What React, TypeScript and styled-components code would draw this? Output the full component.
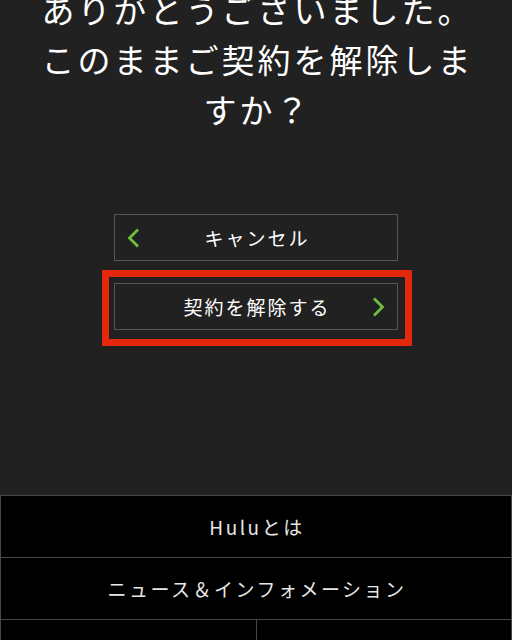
import styled, { createGlobalStyle } from 'styled-components'

const GlobalStyle = createGlobalStyle`
    html, body {
        margin: 0;
        padding: 0;
        background-color: #212121;
        font-family: 'Noto Sans CJK JP', 'Noto Sans', sans-serif;
    }
`

const Chevron = ({ dir }: { dir: 'left' | 'right' }) => (
    <svg width="13" height="20" viewBox="0 0 13 20">
        <polyline
            points={dir === 'left' ? '11,1.5 2.5,10 11,18.5' : '2,1.5 10.5,10 2,18.5'}
            fill="none"
            stroke="#6fbf3c"
            strokeWidth="2.8"
        />
    </svg>
)

export default function App() {
    return (
        <>
            <GlobalStyle />
            <Page>
                <Main>
                    <Title>
                        ありがとうございました。
                        <br />
                        このままご契約を解除しますか？
                    </Title>
                    <Actions>
                        <ActionButton>
                            <IconCell side="left"><Chevron dir="left" /></IconCell>
                            <Label>キャンセル</Label>
                            <IconCell side="right" />
                        </ActionButton>
                        <Highlighted>
                            <ActionButton>
                                <IconCell side="left" />
                                <Label>契約を解除する</Label>
                                <IconCell side="right"><Chevron dir="right" /></IconCell>
                            </ActionButton>
                            <RedFrame />
                        </Highlighted>
                    </Actions>
                </Main>
                <Footer>
                    <FooterRow>
                        <FooterLink>Huluとは</FooterLink>
                    </FooterRow>
                    <FooterRow>
                        <FooterLink>ニュース＆インフォメーション</FooterLink>
                    </FooterRow>
                    <FooterSplit>
                        <FooterCell />
                        <FooterCell />
                    </FooterSplit>
                </Footer>
            </Page>
        </>
    )
}

const Page = styled.div`
    display: flex;
    flex-direction: column;
    min-height: 640px;
    overflow: hidden;
`

const Main = styled.main`
    padding: 0 30px;
`

const Title = styled.h1`
    margin: -16px 0 0 0;
    padding-left: 3px;
    font-size: 33px;
    line-height: 50px;
    letter-spacing: 3px;
    font-weight: 400;
    color: #fff;
    text-align: center;
    word-break: break-all;
`

const Actions = styled.div`
    display: flex;
    flex-direction: column;
    align-items: center;
    gap: 22px;
    margin-top: 80px;
`

const ActionButton = styled.button`
    display: grid;
    grid-template-columns: 44px 1fr 44px;
    align-items: center;
    box-sizing: border-box;
    width: 284px;
    height: 47px;
    padding: 0;
    background: transparent;
    border: 1px solid #575757;
    color: #fff;
    font-family: inherit;
    cursor: pointer;
`

const IconCell = styled.span<{ side: 'left' | 'right' }>`
    display: flex;
    align-items: center;
    justify-content: ${({ side }) => (side === 'left' ? 'flex-start' : 'flex-end')};
    padding: ${({ side }) => (side === 'left' ? '0 0 0 12px' : '0 12px 0 0')};
    height: 100%;
`

const Label = styled.span`
    font-size: 19px;
    letter-spacing: 2px;
    padding-left: 2px;
    text-align: center;
`

const Highlighted = styled.div`
    position: relative;
`

const RedFrame = styled.div`
    position: absolute;
    top: -13px;
    left: -12px;
    right: -14px;
    bottom: -16px;
    border: 7px solid #e3280e;
    pointer-events: none;
`

const Footer = styled.footer`
    margin-top: 165px;
    background-color: #000;
    border: 1px solid #474747;
    border-bottom: none;
`

const FooterRow = styled.div`
    display: flex;
    align-items: center;
    justify-content: center;
    height: 61px;
    border-bottom: 1px solid #474747;
`

const FooterSplit = styled.div`
    display: grid;
    grid-template-columns: 1fr 1fr;
    height: 72px;
`

const FooterCell = styled.div`
    & + & {
        border-left: 1px solid #474747;
    }
`

const FooterLink = styled.a`
    display: flex;
    align-items: center;
    justify-content: center;
    font-size: 19px;
    letter-spacing: 2.5px;
    padding-left: 2px;
    color: #e6e6e6;
    text-decoration: none;
`
